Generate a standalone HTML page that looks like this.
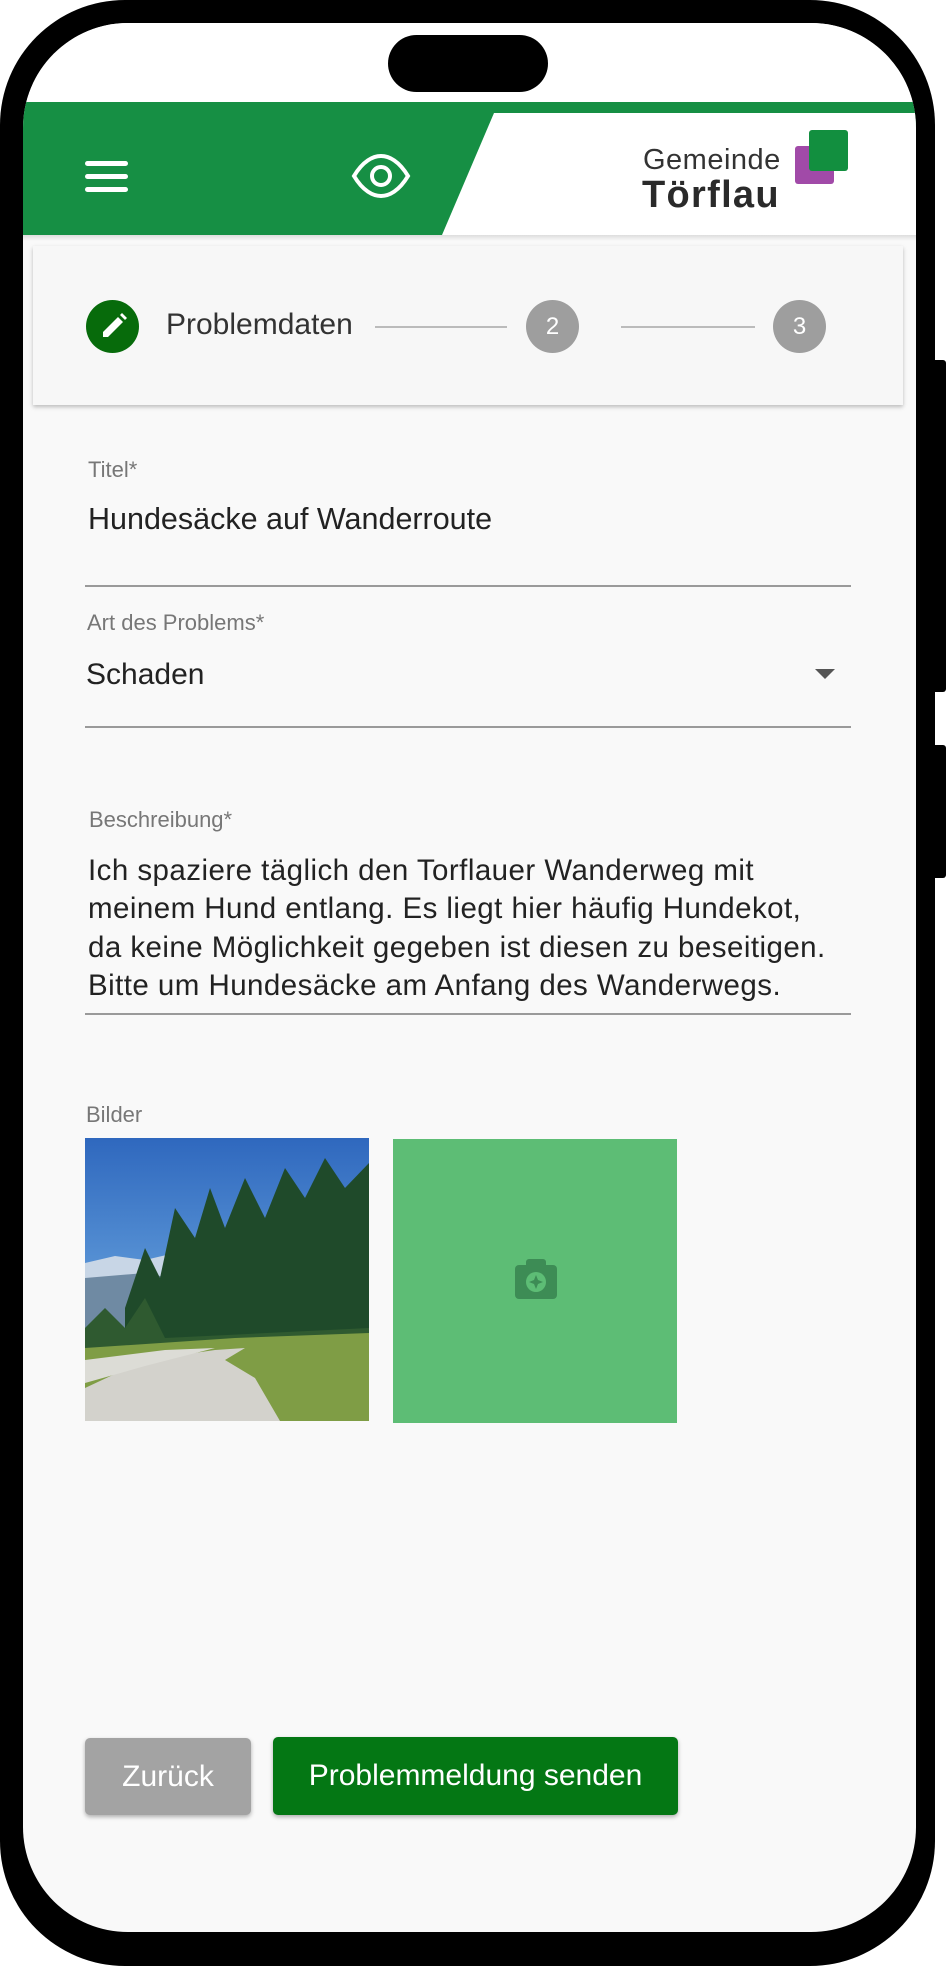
<!DOCTYPE html>
<html><head><meta charset="utf-8"><style>
*{margin:0;padding:0;box-sizing:border-box}
html,body{width:946px;height:1966px;background:#fff;overflow:hidden;font-family:"Liberation Sans",sans-serif}
.abs{position:absolute}
.phone{left:0;top:0;width:935px;height:1966px;background:#000;border-radius:125px}
.btn1{left:930px;top:360px;width:16px;height:332px;background:#000;border-radius:3px}
.btn2{left:930px;top:745px;width:16px;height:133px;background:#000;border-radius:3px}
.screen{left:23px;top:23px;width:893px;height:1909px;background:#f9f9f9;border-radius:105px;overflow:hidden}
.notch{left:388px;top:35px;width:160px;height:57px;background:#000;border-radius:29px}
.lbl{color:#777;font-size:22px}
.val{color:#222;font-size:30.5px}
.line{height:2px;background:#9a9a9a}
</style></head><body>
<div class="abs phone"></div>
<div class="abs btn1"></div>
<div class="abs btn2"></div>
<div class="abs screen">
  <div class="abs" style="left:0;top:0;width:893px;height:79px;background:#fff"></div>
  <div class="abs" style="left:0;top:79px;width:893px;height:133px;background:#168f44"></div>
  <svg class="abs" style="left:0;top:79px" width="893" height="133"><polygon points="471,11 893,11 893,133 419,133" fill="#fff"/></svg>
  <div class="abs" style="left:0;top:212px;width:893px;height:6px;background:linear-gradient(#ddd,#f9f9f9)"></div>
  <div class="abs" style="left:62px;top:138px;width:43px;height:5px;background:#fff;border-radius:3px"></div>
  <div class="abs" style="left:62px;top:151px;width:43px;height:5px;background:#fff;border-radius:3px"></div>
  <div class="abs" style="left:62px;top:164px;width:43px;height:5px;background:#fff;border-radius:3px"></div>
  <svg class="abs" style="left:328px;top:130px" width="60" height="46" viewBox="0 0 60 46"><path d="M3 23 C12 8 22 3 30 3 C38 3 48 8 57 23 C48 38 38 43 30 43 C22 43 12 38 3 23Z" fill="none" stroke="#fff" stroke-width="4"/><circle cx="30" cy="23" r="9" fill="none" stroke="#fff" stroke-width="4"/></svg>
  <div class="abs" style="left:772px;top:123px;width:39px;height:38px;background:#a14aa8;border-radius:3px"></div>
  <div class="abs" style="left:786px;top:107px;width:39px;height:41px;background:#128f3f;border-radius:3px"></div>
  <div class="abs" style="left:620px;top:121px;font-size:29px;color:#333;letter-spacing:0.5px">Gemeinde</div>
  <div class="abs" style="left:619px;top:151px;font-size:38px;color:#2a2a2a;font-weight:bold;letter-spacing:1.3px">Törflau</div>
  <div class="abs" style="left:10px;top:223px;width:870px;height:159px;background:#f7f7f7;box-shadow:0 2px 4px rgba(0,0,0,0.25)"></div>
  <div class="abs" style="left:63px;top:277px;width:53px;height:53px;border-radius:50%;background:#076b0b"></div>
  <svg class="abs" style="left:63px;top:277px" width="53" height="53" viewBox="0 0 53 53"><path d="M17 37 L17 32 L32 17 L37 22 L22 37 Z" fill="#fff"/><path d="M34 15 L36 13 L41 18 L39 20 Z" fill="#fff"/></svg>
  <div class="abs" style="left:143px;top:285px;font-size:30px;color:#333">Problemdaten</div>
  <div class="abs" style="left:352px;top:303px;width:132px;height:2px;background:#bbb"></div>
  <div class="abs" style="left:503px;top:277px;width:53px;height:53px;border-radius:50%;background:#9e9e9e;color:#fff;font-size:24px;text-align:center;line-height:53px">2</div>
  <div class="abs" style="left:598px;top:303px;width:134px;height:2px;background:#bbb"></div>
  <div class="abs" style="left:750px;top:277px;width:53px;height:53px;border-radius:50%;background:#9e9e9e;color:#fff;font-size:24px;text-align:center;line-height:53px">3</div>
  <div class="abs lbl" style="left:65px;top:434px">Titel*</div>
  <div class="abs val" style="left:65px;top:479px">Hundesäcke auf Wanderroute</div>
  <div class="abs line" style="left:62px;top:562px;width:766px"></div>
  <div class="abs lbl" style="left:64px;top:587px">Art des Problems*</div>
  <div class="abs val" style="left:63px;top:635px;font-size:30px">Schaden</div>
  <svg class="abs" style="left:792px;top:646px" width="20" height="11"><polygon points="0,0 20,0 10,10" fill="#555"/></svg>
  <div class="abs line" style="left:62px;top:703px;width:766px"></div>
  <div class="abs lbl" style="left:66px;top:784px">Beschreibung*</div>
  <div class="abs val" style="left:65px;top:829px;font-size:29.5px;line-height:38.3px;letter-spacing:0.45px;white-space:nowrap">Ich spaziere täglich den Torflauer Wanderweg mit<br>meinem Hund entlang. Es liegt hier häufig Hundekot,<br>da keine Möglichkeit gegeben ist diesen zu beseitigen.<br>Bitte um Hundesäcke am Anfang des Wanderwegs.</div>
  <div class="abs line" style="left:62px;top:990px;width:766px"></div>
  <div class="abs lbl" style="left:63px;top:1079px">Bilder</div>
  <svg class="abs" style="left:62px;top:1115px" width="284" height="283" viewBox="0 0 284 283">
    <defs><linearGradient id="sky" x1="0" y1="0" x2="0" y2="1"><stop offset="0" stop-color="#2f68be"/><stop offset="0.5" stop-color="#5a95d6"/><stop offset="1" stop-color="#9cc0e6"/></linearGradient></defs>
    <rect width="284" height="283" fill="url(#sky)"/>
    <path d="M0 125 L30 118 L60 122 L90 115 L110 125 L110 180 L0 180Z" fill="#c8d6e6"/>
    <path d="M0 140 L60 135 L110 145 L110 200 L0 200Z" fill="#6f8aa3"/>
    <path d="M40 280 L40 170 L60 110 L75 140 L90 70 L110 100 L125 50 L140 90 L160 40 L180 80 L200 30 L220 60 L240 20 L260 50 L284 25 L284 230 L40 230Z" fill="#1f4a2a"/>
    <path d="M0 280 L0 190 L20 170 L40 190 L60 160 L80 200 L284 190 L284 283Z" fill="#2f5a30"/>
    <path d="M0 210 L150 200 L284 195 L284 283 L0 283Z" fill="#7f9d45"/>
    <path d="M0 283 L0 250 L60 222 L130 212 L160 210 L140 222 L170 240 L195 283Z" fill="#d3d2cc"/>
    <path d="M0 222 L80 212 L130 210 L60 228 L0 245Z" fill="#dcdcd6"/>
  </svg>
  <div class="abs" style="left:370px;top:1116px;width:284px;height:284px;background:#5dbd75"></div>
  <svg class="abs" style="left:490px;top:1234px" width="46" height="44" viewBox="0 0 46 44"><rect x="2" y="8" width="42" height="34" rx="4" fill="#3d8c55"/><rect x="13" y="2" width="20" height="10" rx="3" fill="#3d8c55"/><circle cx="23" cy="25" r="10" fill="#5dbd75"/><path d="M23 18 L25 23 L30 25 L25 27 L23 32 L21 27 L16 25 L21 23Z" fill="#3d8c55"/></svg>
  <div class="abs" style="left:62px;top:1715px;width:166px;height:77px;background:#a3a3a3;border-radius:5px;box-shadow:0 2px 4px rgba(0,0,0,0.3);color:#fff;font-size:30px;text-align:center;line-height:77px">Zurück</div>
  <div class="abs" style="left:250px;top:1714px;width:405px;height:78px;background:#047714;border-radius:5px;box-shadow:0 2px 4px rgba(0,0,0,0.3);color:#fff;font-size:30px;text-align:center;line-height:78px">Problemmeldung senden</div>
</div>
<div class="abs notch"></div>
</body></html>
